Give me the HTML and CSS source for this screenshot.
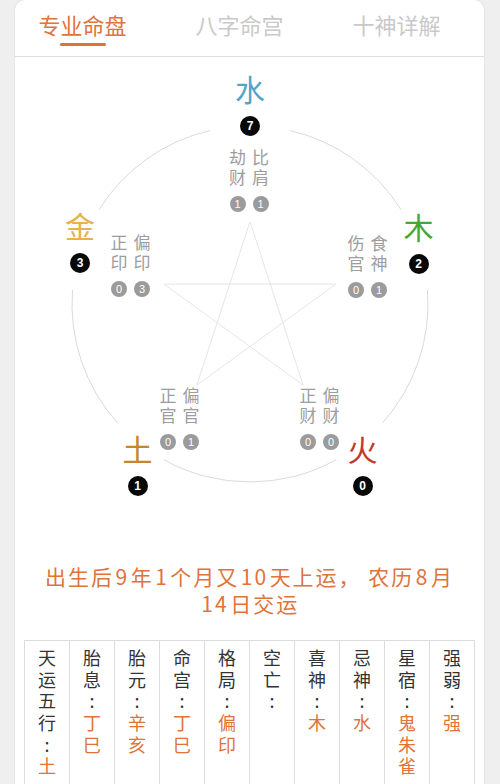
FILE: index.html
```html
<!DOCTYPE html>
<html lang="zh-CN">
<head>
<meta charset="utf-8">
<title>专业命盘</title>
<link rel="stylesheet" href="styles.css">
</head>
<body>
<div class="card">
  <div class="tabbar">
    <div class="tabs">
      <div class="tab active"><span class="tab-label">专业命盘</span><span class="tab-line"></span></div>
      <div class="tab"><span class="tab-label">八字命宫</span></div>
      <div class="tab"><span class="tab-label">十神详解</span></div>
    </div>
  </div>

  <div class="chart">
    <svg class="chart-lines" width="469" height="506" viewBox="15 57 469 506" xmlns="http://www.w3.org/2000/svg">
      <g fill="none" stroke="#dadada" stroke-width="1">
        <path d="M290.04 130.56 A178 178 0 0 1 400.95 209.67"/>
        <path d="M427.45 290.03 A178 178 0 0 1 382.28 423.11"/>
        <path d="M336.30 459.68 A178 178 0 0 1 163.70 459.68"/>
        <path d="M117.72 423.11 A178 178 0 0 1 72.55 290.03"/>
        <path d="M99.05 209.67 A178 178 0 0 1 209.96 130.56"/>
      </g>
      <path d="M250 221.6 L303.14 385.13 L164.03 284.07 L335.97 284.07 L196.86 385.13 Z" fill="none" stroke="#e6e6e6" stroke-width="1" stroke-linejoin="miter"/>
    </svg>

    <div class="el n-shui"><span class="el-char c-shui">水</span><span class="badge">7</span></div>
    <div class="el n-mu"><span class="el-char c-mu">木</span><span class="badge">2</span></div>
    <div class="el n-jin"><span class="el-char c-jin">金</span><span class="badge">3</span></div>
    <div class="el n-tu"><span class="el-char c-tu">土</span><span class="badge">1</span></div>
    <div class="el n-huo"><span class="el-char c-huo">火</span><span class="badge">0</span></div>

    <div class="gods g-shui">
      <div class="god"><span class="god-text">劫财</span><span class="gbadge">1</span></div>
      <div class="god"><span class="god-text">比肩</span><span class="gbadge">1</span></div>
    </div>
    <div class="gods g-jin">
      <div class="god"><span class="god-text">正印</span><span class="gbadge">0</span></div>
      <div class="god"><span class="god-text">偏印</span><span class="gbadge">3</span></div>
    </div>
    <div class="gods g-mu">
      <div class="god"><span class="god-text">伤官</span><span class="gbadge">0</span></div>
      <div class="god"><span class="god-text">食神</span><span class="gbadge">1</span></div>
    </div>
    <div class="gods g-tu">
      <div class="god"><span class="god-text">正官</span><span class="gbadge">0</span></div>
      <div class="god"><span class="god-text">偏官</span><span class="gbadge">1</span></div>
    </div>
    <div class="gods g-huo">
      <div class="god"><span class="god-text">正财</span><span class="gbadge">0</span></div>
      <div class="god"><span class="god-text">偏财</span><span class="gbadge">0</span></div>
    </div>
  </div>

  <p class="desc">出生后<span class="num">9</span>年<span class="num">1</span>个月又<span class="num">10</span>天上运， 农历<span class="num">8</span>月<br><span class="num">14</span>日交运</p>

  <div class="table">
    <div class="cell"><div class="vt">天运五行:<span class="val">土</span></div></div>
    <div class="cell"><div class="vt">胎息:<span class="val">丁巳</span></div></div>
    <div class="cell"><div class="vt">胎元:<span class="val">辛亥</span></div></div>
    <div class="cell"><div class="vt">命宫:<span class="val">丁巳</span></div></div>
    <div class="cell"><div class="vt">格局:<span class="val">偏印</span></div></div>
    <div class="cell"><div class="vt">空亡:</div></div>
    <div class="cell"><div class="vt">喜神:<span class="val">木</span></div></div>
    <div class="cell"><div class="vt">忌神:<span class="val">水</span></div></div>
    <div class="cell"><div class="vt">星宿:<span class="val">鬼朱雀</span></div></div>
    <div class="cell"><div class="vt">强弱:<span class="val">强</span></div></div>
  </div>
</div>
</body>
</html>
```

FILE: styles.css
```css
* { box-sizing: border-box; }

html, body {
  margin: 0;
  padding: 0;
}

body {
  background: #efefef;
  font-family: "Noto Sans CJK SC", "Noto Sans", sans-serif;
  width: 500px;
  height: 784px;
  overflow: hidden;
}

.card {
  margin-left: 15px;
  width: 469px;
  min-height: 800px;
  background: #ffffff;
  border-radius: 10px 10px 0 0;
  box-shadow: 0 0 0 1px #e6e6e6;
}

/* tabs */
.tabbar {
  height: 57px;
  border-bottom: 1px solid #dedede;
}

.tabs {
  display: grid;
  grid-template-columns: repeat(3, 157px);
  margin-left: -11px;
  padding-top: 10px;
}

.tab {
  display: flex;
  flex-direction: column;
  align-items: center;
}

.tab-label {
  font-size: 22px;
  line-height: 28px;
  color: #c9c9c9;
}

.tab.active .tab-label {
  color: #e0733a;
}

.tab-line {
  margin-top: 5px;
  width: 46px;
  height: 3px;
  border-radius: 2px;
  background: #e0733a;
}

/* chart */
.chart {
  position: relative;
  height: 506px;
}

.chart-lines {
  position: absolute;
  left: 0;
  top: 0;
}

.el {
  position: absolute;
  display: flex;
  flex-direction: column;
  align-items: center;
  transform: translateX(-50%);
}

.el-char {
  font-size: 30px;
  line-height: 34px;
}

.badge {
  margin-top: 11px;
  width: 20px;
  height: 20px;
  border-radius: 50%;
  background: #080808;
  color: #ffffff;
  font-family: "Liberation Sans", Arial, sans-serif;
  font-weight: bold;
  font-size: 12px;
  line-height: 20px;
  text-align: center;
}

.c-shui { color: #4fa6c6; }
.c-mu   { color: #43a73a; }
.c-jin  { color: #e8b14d; }
.c-tu   { color: #c5862c; }
.c-huo  { color: #c23a2c; }

.n-shui { left: 235px;   top: 13.5px; }
.n-jin  { left: 65px;    top: 151px; }
.n-mu   { left: 403.5px; top: 152px; }
.n-tu   { left: 122.5px; top: 374px; }
.n-huo  { left: 347.5px; top: 374px; }

.gods {
  position: absolute;
  display: flex;
  gap: 6px;
  transform: translateX(-50%);
}

.god {
  width: 17px;
  display: flex;
  flex-direction: column;
  align-items: center;
}

.god-text {
  display: block;
  writing-mode: vertical-rl;
  text-orientation: upright;
  margin-top: 2px;
  font-size: 17px;
  line-height: 17px;
  letter-spacing: 3px;
  color: #9d9d9d;
}

.gbadge {
  margin-top: 7px;
  width: 16px;
  height: 16px;
  border-radius: 50%;
  background: #9b9b9b;
  color: #ffffff;
  font-family: "Liberation Sans", Arial, sans-serif;
  font-size: 11px;
  line-height: 16px;
  text-align: center;
}

.g-shui { left: 234px;   top: 90px; }
.g-jin  { left: 115.5px; top: 175px; }
.g-mu   { left: 352.5px; top: 176px; }
.g-tu   { left: 164.5px; top: 328px; }
.g-huo  { left: 304.5px; top: 328px; }

/* description */
.desc {
  margin: 0 0 23px;
  font-size: 21px;
  line-height: 27px;
  letter-spacing: 2px;
  color: #e0733a;
  text-align: center;
}

.num {
  margin: 0 1.5px;
}

/* table */
.table {
  margin: 0 9px;
  display: grid;
  grid-template-columns: repeat(10, 1fr);
  border-top: 1px solid #dcdcdc;
  border-right: 1px solid #dcdcdc;
}

.cell {
  display: flex;
  justify-content: center;
  align-items: flex-start;
  border-left: 1px solid #dcdcdc;
  height: 170px;
  padding-top: 8px;
}

.vt {
  writing-mode: vertical-rl;
  text-orientation: upright;
  font-size: 18px;
  line-height: 18px;
  letter-spacing: 3.7px;
  color: #333333;
}

.val {
  color: #e0733a;
}
```
